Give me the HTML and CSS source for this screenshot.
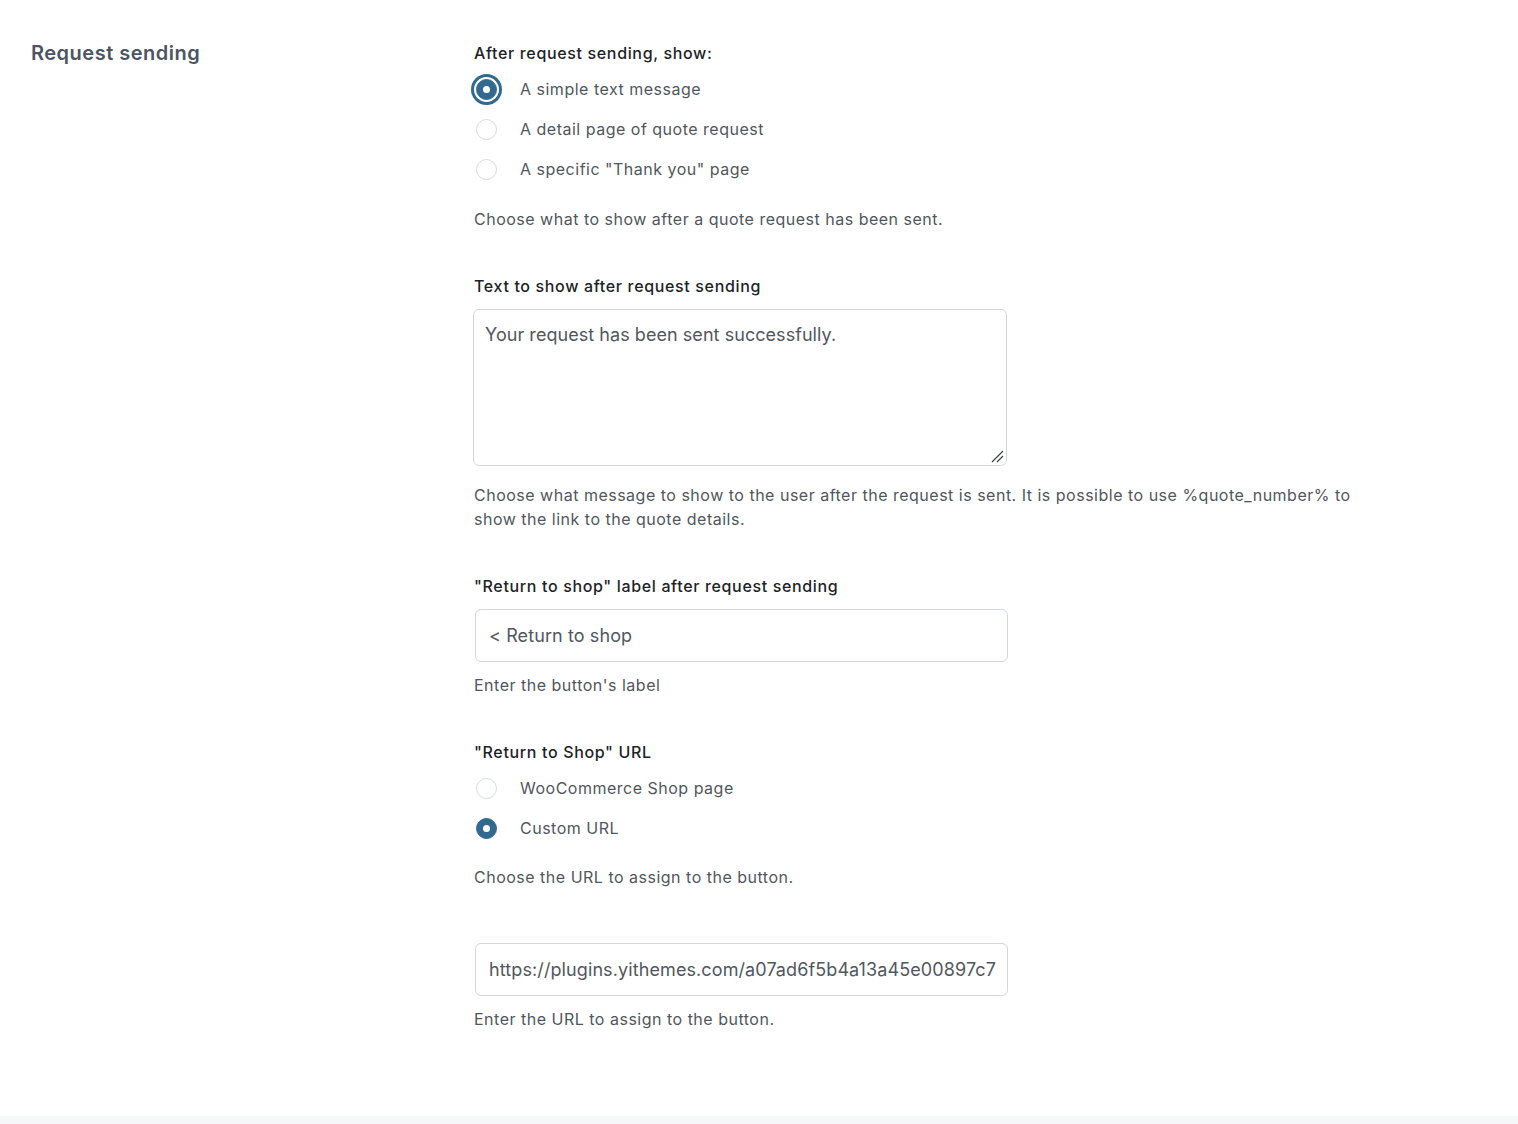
FILE: index.html
```html
<!DOCTYPE html>
<html>
<head>
<meta charset="utf-8">
<link rel="stylesheet" href="styles.css">
</head>
<body>
<div class="page">
  <div class="section">
    <div class="section-title">Request sending</div>
    <div class="fields">
      <div class="field">
        <div class="field-label">After request sending, show:</div>
        <div class="radios">
          <label class="radio-row"><span class="radio checked focused"></span><span class="radio-text">A simple text message</span></label>
          <label class="radio-row"><span class="radio"></span><span class="radio-text">A detail page of quote request</span></label>
          <label class="radio-row"><span class="radio"></span><span class="radio-text">A specific "Thank you" page</span></label>
        </div>
        <div class="desc desc-after-radio">Choose what to show after a quote request has been sent.</div>
      </div>

      <div class="field">
        <div class="field-label">Text to show after request sending</div>
        <div class="textarea">Your request has been sent successfully.
          <svg class="grip" width="14" height="14" viewBox="0 0 14 14"><path d="M2 13 L13 2 M7 13 L13 7" stroke="#3c434a" stroke-width="1.2" fill="none"/></svg>
        </div>
        <div class="desc desc-after-textarea">Choose what message to show to the user after the request is sent. It is possible to use %quote_number% to show the link to the quote details.</div>
      </div>

      <div class="field">
        <div class="field-label">"Return to shop" label after request sending</div>
        <div class="input">&lt; Return to shop</div>
        <div class="desc">Enter the button's label</div>
      </div>

      <div class="field">
        <div class="field-label">"Return to Shop" URL</div>
        <div class="radios">
          <label class="radio-row"><span class="radio"></span><span class="radio-text">WooCommerce Shop page</span></label>
          <label class="radio-row"><span class="radio checked"></span><span class="radio-text">Custom URL</span></label>
        </div>
        <div class="desc desc-after-radio-2">Choose the URL to assign to the button.</div>
      </div>

      <div class="field field-url">
        <div class="input">https://plugins.yithemes.com/a07ad6f5b4a13a45e00897c7</div>
        <div class="desc">Enter the URL to assign to the button.</div>
      </div>
    </div>
  </div>
  <div class="footer-band"></div>
</div>
</body>
</html>
```

FILE: styles.css
```css
* { box-sizing: border-box; }
html, body { margin: 0; padding: 0; background: #ffffff; }
body {
  font-family: Inter, "Noto Sans", "Liberation Sans", sans-serif;
  color: #50575e;
  font-size: 16px;
  letter-spacing: 0.5px;
}
.page {
  min-height: 1124px;
  display: flex;
  flex-direction: column;
}
.section {
  display: flex;
  padding: 40px 0 0 31px;
  flex: 1;
}
.section-title {
  width: 443px;
  flex: none;
  font-size: 20px;
  font-weight: 600;
  color: #4b5563;
  line-height: 26px;
}
.fields {
  display: flex;
  flex-direction: column;
  padding-top: 2px;
}
.field { display: flex; flex-direction: column; margin-bottom: 44px; }
.field-label {
  font-size: 16px;
  font-weight: 500;
  color: #1d2327;
  line-height: 22px;
  letter-spacing: 0.65px;
  margin-bottom: 3px;
}
.radios { display: flex; flex-direction: column; margin-top: 2px; }
.radio-row {
  display: flex;
  align-items: center;
  height: 40px;
}
.radio {
  width: 21px;
  height: 21px;
  border-radius: 50%;
  border: 1px solid #d6dadd;
  background: #fff;
  margin-left: 2px;
  margin-right: 23px;
  flex: none;
  position: relative;
}
.radio.checked {
  background: #326a8f;
  border-color: #326a8f;
}
.radio.checked::after {
  content: "";
  position: absolute;
  left: 50%;
  top: 50%;
  width: 7px;
  height: 7px;
  margin: -3.5px 0 0 -3.5px;
  border-radius: 50%;
  background: #fff;
}
.radio.focused {
  box-shadow: 0 0 0 2px #fff, 0 0 0 5px #326a8f;
}
.radio-text { font-size: 16px; color: #50575e; }
.desc {
  font-size: 16px;
  line-height: 24px;
  color: #50575e;
  margin-top: 11px;
  max-width: 890px;
}
.desc-after-radio { margin-top: 18px; }
.desc-after-radio-2 { margin-top: 17px; }
.desc-after-textarea { margin-top: 17px; }
.textarea {
  position: relative;
  width: 534px;
  height: 157px;
  margin-top: 9px;
  border: 1px solid #d3d7db;
  border-radius: 6px;
  padding: 13px 11px;
  font-size: 18px;
  line-height: 24px;
  color: #50575e;
  letter-spacing: 0.05px;
  margin-left: -1px;
}
.grip { position: absolute; right: 2px; bottom: 2px; }
.input {
  width: 533px;
  height: 53px;
  margin-top: 9px;
  margin-left: 1px;
  border: 1px solid #d3d7db;
  border-radius: 6px;
  padding: 0 13px;
  display: flex;
  align-items: center;
  font-size: 18px;
  letter-spacing: 0.1px;
  color: #50575e;
  white-space: nowrap;
  overflow: hidden;
}
.field-url { margin-top: 1px; }
.footer-band {
  height: 8px;
  background: #f6f7f9;
}
```
